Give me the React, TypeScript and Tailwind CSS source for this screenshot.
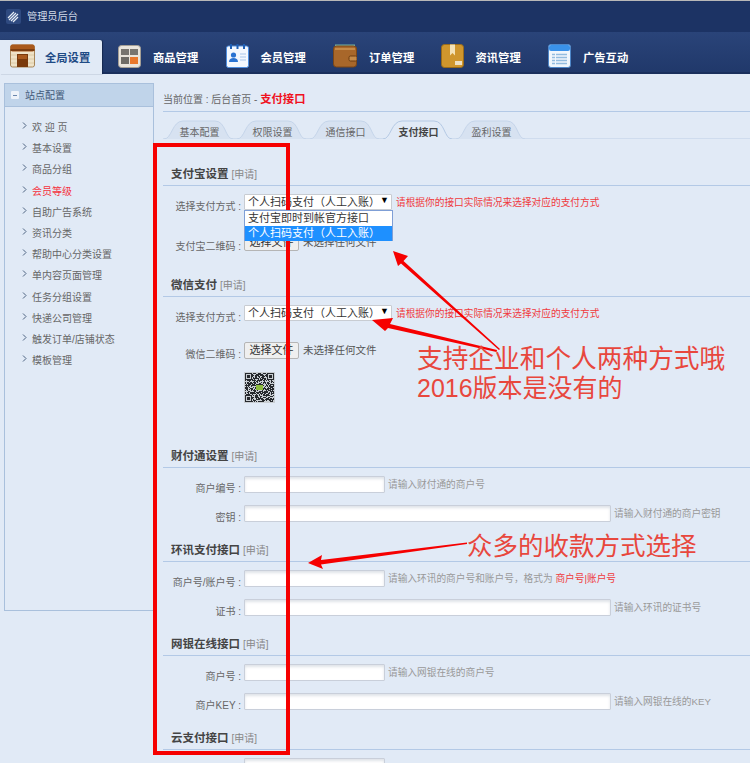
import type { ReactNode } from "react"

const FONT = "font-['Liberation_Sans','Noto_Sans_CJK_SC',sans-serif]"

const SIDE_ITEMS = [
  "欢 迎 页",
  "基本设置",
  "商品分组",
  "会员等级",
  "自助广告系统",
  "资讯分类",
  "帮助中心分类设置",
  "单内容页面管理",
  "任务分组设置",
  "快递公司管理",
  "触发订单/店铺状态",
  "模板管理",
]

const TABS = ["基本配置", "权限设置", "通信接口", "支付接口", "盈利设置"]

function ShopIcon() {
  return (
    <svg width="25" height="24" viewBox="0 0 25 24">
      <rect x="0.5" y="1" width="24" height="22" rx="2" fill="#efe3c8" stroke="#a8875a" />
      <rect x="0.5" y="0.5" width="24" height="7" rx="2" fill="#a9591c" />
      <rect x="0.5" y="5" width="24" height="2" fill="#7c3d10" />
      <path d="M1 11h23M1 15h23M1 19h23" stroke="#dccaa6" />
      <rect x="7" y="10" width="11" height="13" fill="#7a3a0c" />
      <rect x="8" y="11" width="9" height="4" fill="#a9591c" />
    </svg>
  )
}

function GoodsIcon() {
  return (
    <svg width="23" height="23" viewBox="0 0 23 23">
      <rect x="0.5" y="0.5" width="22" height="22" rx="3" fill="#e9e4dc" stroke="#a59f95" />
      <rect x="3" y="4" width="8" height="6" fill="#77746f" />
      <rect x="12" y="4" width="8" height="6" fill="#77746f" />
      <rect x="3" y="12" width="8" height="7" fill="#6e6b66" />
      <rect x="12" y="12" width="8" height="7" fill="#e8772c" />
    </svg>
  )
}

function MemberIcon() {
  return (
    <svg width="23" height="24" viewBox="0 0 23 24">
      <rect x="0.5" y="2" width="22" height="21.5" rx="2" fill="#f4f8fe" stroke="#4f8fe0" />
      <path d="M5 0v5M11.5 0v5M18 0v5" stroke="#1f5fb5" strokeWidth="2" />
      <circle cx="7.5" cy="11" r="2.6" fill="#2a73d2" />
      <path d="M3 18c0-3 2-4 4.500-4s4.500 1 4.500 4z" fill="#2a73d2" />
      <path d="M14 10h6M14 13h6M14 16h6" stroke="#a9c6ea" />
    </svg>
  )
}

function WalletIcon() {
  return (
    <svg width="24" height="24" viewBox="0 0 24 24">
      <rect x="2" y="0.500" width="20" height="5" fill="#78b3a4" />
      <rect x="0.500" y="2" width="23" height="21" rx="3" fill="#a8672a" stroke="#7a4617" />
      <rect x="2" y="4" width="20" height="2" fill="#c58a48" />
      <rect x="16" y="12" width="8" height="5" rx="1.500" fill="#c58a48" stroke="#6c3d12" />
    </svg>
  )
}

function BoxIcon() {
  return (
    <svg width="23" height="24" viewBox="0 0 23 24">
      <rect x="0.500" y="0.500" width="22" height="23" rx="3" fill="#cf962d" stroke="#9a6c1a" />
      <path d="M9 0.500h5v11l-2.500-2.500L9 11.500z" fill="#f4e2b6" />
      <rect x="14" y="17" width="7" height="4" fill="#ede0c4" />
    </svg>
  )
}

function ListIcon() {
  return (
    <svg width="23" height="24" viewBox="0 0 23 24">
      <rect x="0.500" y="0.500" width="22" height="23" rx="2.500" fill="#f0f6fc" stroke="#4d86c8" />
      <rect x="1" y="1" width="21" height="6" rx="2" fill="#3a92ea" />
      <path d="M4 10.500h15M4 13.500h15M4 16.500h15M4 19.500h15" stroke="#93bcdf" strokeWidth="1.500" />
      <path d="M7.500 9v12" stroke="#f0f6fc" />
    </svg>
  )
}

const NAV = [
  { label: "商品管理", icon: <GoodsIcon /> },
  { label: "会员管理", icon: <MemberIcon /> },
  { label: "订单管理", icon: <WalletIcon /> },
  { label: "资讯管理", icon: <BoxIcon /> },
  { label: "广告互动", icon: <ListIcon /> },
]

function Logo() {
  return (
    <svg width="15" height="15" viewBox="0 0 15 15">
      <rect width="15" height="15" rx="2" fill="#2f4a80" />
      <path d="M2 9l6-6M3 11l7-7M5 12l7-7M7 13l5-5" stroke="#e6edf6" strokeWidth="1.200" />
    </svg>
  )
}

function TabShape({ active }: { active: boolean }) {
  return (
    <svg className="absolute inset-0" width="73" height="19" viewBox="0 0 73 19">
      <path
        d="M1 19C9 19 9 1 20 1H52C63 1 62 19 70 19"
        fill={active ? "#e1eaf6" : "#d7e2f1"}
        stroke={active ? "#b4c9e4" : "#c5d5ea"}
      />
    </svg>
  )
}

function Qr() {
  // fake code pattern, only has to read as a QR at this size
  const cells: ReactNode[] = []
  const finder = (x: number, y: number, ox: number, oy: number) => {
    const dx = x - ox
    const dy = y - oy
    if (dx < 0 || dy < 0 || dx > 6 || dy > 6) return null
    return dx === 0 || dy === 0 || dx === 6 || dy === 6 || (dx > 1 && dx < 5 && dy > 1 && dy < 5)
  }
  for (let y = 0; y < 29; y++) {
    for (let x = 0; x < 29; x++) {
      const f = finder(x, y, 0, 0) ?? finder(x, y, 22, 0) ?? finder(x, y, 0, 22)
      const on = f ?? ((x * x * 3 + y * 7 + x * y * 5 + (x ^ y)) % 5 < 3)
      if (on) cells.push(<rect key={`${x}-${y}`} x={x} y={y} width="1" height="1" fill="#26292d" />)
    }
  }
  return (
    <svg width="31" height="31" viewBox="-1 -1 31 31">
      <rect x="-1" y="-1" width="31" height="31" fill="#c9ced3" />
      {cells}
      <rect x="11" y="12" width="7" height="5" fill="#8dbb3e" />
    </svg>
  )
}

function SectionTitle({ title }: { title: string }) {
  return (
    <div className="flex h-[22px] items-center border-b border-[#b3c9e6] pl-2">
      <span className="text-[11.500px] font-bold text-[#444]">{title}</span>
      <span className="ml-[3px] text-[10px] text-[#888]">[申请]</span>
    </div>
  )
}

function Row({ label, children, className }: { label: string; children: ReactNode; className: string }) {
  return (
    <div className={`flex items-start ${className}`}>
      <label className="w-[81px] shrink-0 pr-[3px] pt-[6px] text-right text-[10px] leading-[14px] text-[#666]">
        {label} :
      </label>
      {children}
    </div>
  )
}

const INPUT = "h-[17px] rounded-[1px] border border-[#c9cfda] bg-white shadow-[inset_0_2px_3px_#dfe3e8] outline-none"

function TextRow({ label, wide, hint, className }: { label: string; wide?: boolean; hint: ReactNode; className: string }) {
  return (
    <Row label={label} className={`h-[17px] ${className}`}>
      <input type="text" className={`${INPUT} ${wide ? "w-[367px]" : "w-[141px]"}`} />
      <span className="ml-[3px] pt-[2px] text-[9.700px] leading-[14px] text-[#999]">{hint}</span>
    </Row>
  )
}

function SelectBox() {
  return (
    <div className="flex h-[16px] w-[148px] items-center justify-between rounded-[1px] border border-[#c8ccd2] bg-white pr-[3px] pl-[3px] text-[11px] leading-none text-[#333]">
      <span className="whitespace-nowrap">个人扫码支付（人工入账）</span>
      <span className="mb-[3px] text-[9px] text-black">▼</span>
    </div>
  )
}

function FileBox() {
  return (
    <div className="flex items-center">
      <button className="h-[17px] w-[55px] rounded-[2px] border border-[#b5b5b5] bg-[#efefef] text-[11px] leading-none text-[#333]">
        选择文件
      </button>
      <span className="ml-[4px] text-[10.500px] text-[#555]">未选择任何文件</span>
    </div>
  )
}

function WarnText() {
  return (
    <span className="ml-[4px] pt-[2px] text-[9.700px] leading-[14px] whitespace-nowrap text-[#f0393c]">
      请根据你的接口实际情况来选择对应的支付方式
    </span>
  )
}

function Annotations() {
  return (
    <>
      <div className="absolute top-[143px] left-[153px] h-[612px] w-[137px] border-[4px] border-[#f60000]" />
      <svg className="absolute inset-0" width="750" height="763" viewBox="0 0 750 763">
        <g fill="#f60000">
          <path d="M393 251L408 256L403.500 261L500 349L499 350L401 263.500L398 266z" />
          <path d="M372 320L393 318L390 324L497 350L496.500 352L388 328L385 331z" />
          <path d="M308 563L322 555L321 560L467 542.500L467 544L321 564.500L323 569z" />
        </g>
      </svg>
      <div className="absolute top-[344px] left-[417px] text-[25.700px] leading-[30px] whitespace-nowrap text-[#e8473d]">
        支持企业和个人两种方式哦
      </div>
      <div className="absolute top-[373px] left-[417px] text-[25px] leading-[30px] whitespace-nowrap text-[#e8473d]">
        2016版本是没有的
      </div>
      <div className="absolute top-[531px] left-[467px] text-[25.500px] leading-[30px] whitespace-nowrap text-[#e8473d]">
        众多的收款方式选择
      </div>
    </>
  )
}

export default function App() {
  return (
    <div className={`relative h-[763px] w-[750px] overflow-hidden bg-[#e1eaf6] ${FONT}`}>
      <header className="flex h-[32px] items-center gap-[6px] border-t border-[#b8b8b8] bg-[#1c3364] pl-[6px]">
        <Logo />
        <span className="text-[10.200px] text-[#d3dbe8]">管理员后台</span>
      </header>

      <nav className="flex h-[42px] items-end bg-gradient-to-b from-[#2a4479] to-[#20386a] shadow-[inset_0_-2px_0_#1a2f5c]">
        <div className="flex h-[34px] w-[102px] items-center gap-[10px] rounded-tr-[2px] bg-[#e1eaf6] pb-[2px] pl-[10px] shadow-[1px_0_1px_#16294f]">
          <ShopIcon />
          <span className="mt-[4px] text-[11.300px] font-bold text-[#1f4b85]">全局设置</span>
        </div>
        <div className="ml-[16px] flex">
          {NAV.map((item) => (
            <div key={item.label} className="flex h-[34px] w-[107.500px] items-center gap-[12px] pb-[2px]">
              {item.icon}
              <span className="mt-[4px] text-[11.300px] font-bold text-white">{item.label}</span>
            </div>
          ))}
        </div>
      </nav>

      <div className="mt-[9px] flex">
        <aside className="ml-[4px] h-[528px] w-[150px] shrink-0 border border-[#a9c0dc]">
          <div className="flex h-[23px] items-center gap-[6px] border-b border-[#a9c0dc] bg-[#c0d4ea] pl-[6px]">
            <span className="flex h-[8px] w-[8px] items-center justify-center rounded-[1px] bg-[#eef3fa]">
              <span className="h-[1px] w-[4px] bg-[#6b87ad]" />
            </span>
            <span className="text-[10px] text-[#3f5878]">站点配置</span>
          </div>
          <ul className="pt-[10px]">
            {SIDE_ITEMS.map((item) => (
              <li key={item} className="flex h-[21.200px] items-center pl-[17px]">
                <svg className="mb-[4px] shrink-0" width="5" height="7" viewBox="0 0 5 7">
                  <path d="M1 0.500L4 3.500L1 6.500" fill="none" stroke="#4d6380" />
                </svg>
                <span className={`ml-[5px] text-[10px] whitespace-nowrap ${item === "会员等级" ? "text-[#f5333f]" : "text-[#666]"}`}>
                  {item}
                </span>
              </li>
            ))}
          </ul>
        </aside>

        <main className="ml-[9px] min-w-0 flex-1">
          <div className="h-[29px] border-b border-[#b3c9e6] pt-[9px] text-[10px] leading-[14px] text-[#666]">
            当前位置 : 后台首页 - <span className="text-[11.300px] font-bold text-[#f01020]">支付接口</span>
          </div>

          <div className="mt-[8px] flex h-[19px] border-b border-[#cfdcee]">
            {TABS.map((tab) => (
              <div key={tab} className="relative flex h-[19px] w-[73px] items-center justify-center pt-[5px]">
                <TabShape active={tab === "支付接口"} />
                <span className={`relative text-[10px] ${tab === "支付接口" ? "font-bold text-[#444]" : "text-[#666]"}`}>
                  {tab}
                </span>
              </div>
            ))}
          </div>

          <section className="mt-[25px]">
            <SectionTitle title="支付宝设置" />
            <div className="relative pt-[8px]">
              <Row label="选择支付方式" className="h-[16px]">
                <SelectBox />
                <WarnText />
              </Row>
              <div className="absolute top-[24px] left-[81px] z-10 h-[31px] w-[149px] border border-[#7f9fd6] bg-white text-[11px] leading-[15px] text-[#333]">
                <div className="pl-[3px]">支付宝即时到帐官方接口</div>
                <div className="bg-[#1e90ff] pl-[3px] text-white">个人扫码支付（人工入账）</div>
              </div>
              <Row label="支付宝二维码" className="mt-[24px] h-[17px]">
                <FileBox />
              </Row>
            </div>
          </section>

          <section className="mt-[24px]">
            <SectionTitle title="微信支付" />
            <Row label="选择支付方式" className="mt-[8px] h-[16px]">
              <SelectBox />
              <WarnText />
            </Row>
            <Row label="微信二维码" className="mt-[21px] h-[18px]">
              <FileBox />
            </Row>
            <div className="mt-[12px] ml-[81px]">
              <Qr />
            </div>
          </section>

          <section className="mt-[43px]">
            <SectionTitle title="财付通设置" />
            <TextRow label="商户编号" hint="请输入财付通的商户号" className="mt-[8px]" />
            <TextRow label="密钥" wide hint="请输入财付通的商户密钥" className="mt-[12px]" />
          </section>

          <section className="mt-[18px]">
            <SectionTitle title="环讯支付接口" />
            <TextRow
              label="商户号/账户号"
              hint={
                <>
                  请输入环讯的商户号和账户号，格式为 <span className="text-[#f0393c]">商户号|账户号</span>
                </>
              }
              className="mt-[8px]"
            />
            <TextRow label="证书" wide hint="请输入环讯的证书号" className="mt-[12px]" />
          </section>

          <section className="mt-[18px]">
            <SectionTitle title="网银在线接口" />
            <TextRow label="商户号" hint="请输入网银在线的商户号" className="mt-[8px]" />
            <TextRow label="商户KEY" wide hint="请输入网银在线的KEY" className="mt-[12px]" />
          </section>

          <section className="mt-[18px]">
            <SectionTitle title="云支付接口" />
            <input type="text" className={`${INPUT} mt-[8px] ml-[81px] block w-[141px]`} />
          </section>
        </main>
      </div>

      <Annotations />
    </div>
  )
}
